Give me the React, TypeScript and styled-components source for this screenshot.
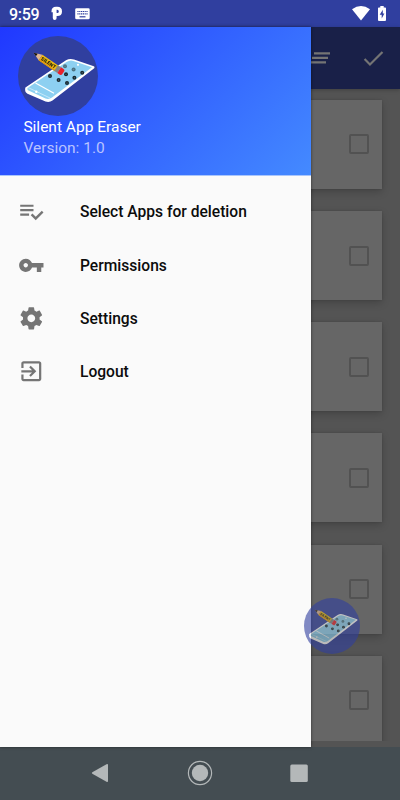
import React from 'react';
import styled, { createGlobalStyle } from 'styled-components';

const GlobalStyle = createGlobalStyle`
  * { box-sizing: border-box; }
  body { margin: 0; background: #545454; font-family: Roboto, sans-serif; overflow: hidden; }
  svg { display: block; }
`;

const Screen = styled.div`
  position: relative;
  width: 400px;
  height: 800px;
  display: flex;
  flex-direction: column;
  overflow: hidden;
`;

const StatusBar = styled.header`
  flex: 0 0 27px;
  display: flex;
  align-items: center;
  background: #303f9f;
  color: #fff;
  padding: 0 14px 0 9px;
`;

const Clock = styled.span`
  width: 42px;
  font-size: 16px;
  font-weight: 500;
  line-height: 24px;
  letter-spacing: -0.3px;
  padding-top: 2px;
`;

const StatusIcons = styled.div<{ $gap: number; $end?: boolean }>`
  display: flex;
  align-items: center;
  gap: ${(p) => p.$gap}px;
  margin-left: ${(p) => (p.$end ? 'auto' : '0')};
`;

const Body = styled.div`
  position: relative;
  flex: 1;
  min-height: 0;
  background: #545454;
`;

const AppBar = styled.div`
  height: 62px;
  display: flex;
  align-items: center;
  justify-content: flex-end;
  gap: 30px;
  padding-right: 13px;
  background: #192048;
  box-shadow: 0 1px 4px rgba(0, 0, 0, 0.25);
`;

const CardList = styled.div`
  display: flex;
  flex-direction: column;
  gap: 22.15px;
  padding: 11px 18px 0;
  height: 652px;
  overflow: hidden;
`;

const Card = styled.div`
  flex: 0 0 89px;
  display: flex;
  justify-content: flex-end;
  padding: 34.4px 13px 0 0;
  background: #666;
  box-shadow: 0 3px 8px rgba(0, 0, 0, 0.2), 0 0 2px rgba(0, 0, 0, 0.12);
`;

const CheckBox = styled.div`
  width: 20px;
  height: 20px;
  border: 2px solid #525252;
  border-radius: 2px;
`;

const Drawer = styled.aside`
  position: absolute;
  inset: 0 auto 0 0;
  width: 311px;
  background: #fafafa;
  box-shadow: 0 0 3px rgba(0, 0, 0, 0.5);
`;

const DrawerHeader = styled.div`
  height: 149px;
  padding: 9px 0 0 18px;
  background: linear-gradient(135deg, #2038ff 0%, #448aff 100%);
  border-bottom: 1px solid #a9c5fb;
`;

const AppName = styled.div`
  margin: 1px 0 0 5.4px;
  font-size: 15.5px;
  line-height: 21px;
  color: #fff;
`;

const Version = styled(AppName)`
  margin-top: 0;
  color: #b9c3ff;
`;

const Menu = styled.nav`
  display: flex;
  flex-direction: column;
  padding-top: 9px;
`;

const MenuItem = styled.div`
  height: 53.3px;
  display: flex;
  align-items: center;
  gap: 35.4px;
  padding-left: 18px;
  font-size: 15.6px;
  font-weight: 460;
  color: #0c0c0c;
`;

const MenuLabel = styled.span`
  padding-top: 1.2px;
`;

const Fab = styled.div`
  position: absolute;
  left: 304px;
  top: 598px;
  opacity: 0.6;
`;

const NavBar = styled.footer`
  flex: 0 0 53px;
  display: flex;
  align-items: center;
  justify-content: center;
  gap: 74px;
  padding-bottom: 1px;
  background: #444d52;
`;

function Icon({ d, size = 26.6, color = '#757575' }: { d: string; size?: number; color?: string }) {
  return (
    <svg width={size} height={size} viewBox="0 0 24 24" fill={color}>
      <path d={d} />
    </svg>
  );
}

const menu = [
  { label: 'Select Apps for deletion', d: 'M14 10H2v2h12v-2zm0-4H2v2h12V6zM2 16h8v-2H2v2zm19.5-4.5L23 13l-6.99 7-4.51-4.5L13 14l3.01 3 5.49-5.5z' },
  { label: 'Permissions', d: 'M12.65 10C11.83 7.67 9.61 6 7 6c-3.31 0-6 2.69-6 6s2.69 6 6 6c2.61 0 4.83-1.67 5.65-4H17v4h4v-4h2v-4H12.65zM7 14c-1.1 0-2-.9-2-2s.9-2 2-2 2 .9 2 2-.9 2-2 2z' },
  { label: 'Settings', d: 'M19.43 12.98c.04-.32.07-.64.07-.98s-.03-.66-.07-.98l2.11-1.65c.19-.15.24-.42.12-.64l-2-3.46c-.12-.22-.39-.3-.61-.22l-2.49 1c-.52-.4-1.08-.73-1.69-.98l-.38-2.65C14.46 2.18 14.25 2 14 2h-4c-.25 0-.46.18-.49.42l-.38 2.65c-.61.25-1.17.59-1.69.98l-2.49-1c-.23-.09-.49 0-.61.22l-2 3.46c-.13.22-.07.49.12.64l2.11 1.65c-.04.32-.07.65-.07.98s.03.66.07.98l-2.11 1.65c-.19.15-.24.42-.12.64l2 3.46c.12.22.39.3.61.22l2.49-1c.52.4 1.08.73 1.69.98l.38 2.65c.03.24.24.42.49.42h4c.25 0 .46-.18.49-.42l.38-2.65c.61-.25 1.17-.59 1.69-.98l2.49 1c.23.09.49 0 .61-.22l2-3.46c.12-.22.07-.49-.12-.64l-2.11-1.65zM12 15.5c-1.93 0-3.5-1.57-3.5-3.5s1.57-3.5 3.5-3.5 3.5 1.57 3.5 3.5-1.57 3.5-3.5 3.5z' },
  { label: 'Logout', d: 'M10.09 15.59L11.5 17l5-5-5-5-1.41 1.41L12.67 11H3v2h9.67l-2.58 2.59zM19 3H5c-1.11 0-2 .9-2 2v4h2V5h14v14H5v-4H3v4c0 1.1.89 2 2 2h14c1.1 0 2-.9 2-2V5c0-1.1-.9-2-2-2z' },
];

const dots = [[32, 40], [40.6, 44], [49, 47], [47, 30.3], [55.6, 33.4], [64.2, 36.8], [48, 38.3], [56.4, 41.7]];

function Logo({ size }: { size: number }) {
  return (
    <svg width={size} height={size} viewBox="0 0 80 80">
      <circle cx="40" cy="40" r="40" fill="#303f9f" />
      <path d="M7.4 51.6 L48 24.3 Q52 22 56 23.6 L75.8 30.3 Q77.2 31 76.2 32.3 L34.5 64.6 Q31.5 66.8 27.5 65.6 L9.5 57.8 Q6.6 56.3 7.2 52.3Z" fill="#fff" />
      <path d="M9.8 51.7 L48.5 26 Q52 23.7 55.3 24.9 L74 31.2 L34 61.6 Q31 63.8 27.5 62.6 L10 54.2 Q8.6 52.8 9.8 51.7Z" fill="#8dd0f1" />
      <path d="M17.5 47 L36 57.3" stroke="#fff" strokeWidth="1.2" />
      <path d="M10 51.5 L32 62" stroke="#d3eefa" strokeWidth=".8" />
      <circle cx="18.3" cy="55.7" r="1.2" fill="#fff" />
      <circle cx="60" cy="28.8" r="1.1" fill="#fff" />
      {dots.map(([x, y], i) => (
        <g key={i}>
          <circle cx={x} cy={y} r="2" fill={i === 3 || i === 4 ? '#4d7585' : '#17282f'} />
          <circle cx={x} cy={y} r=".5" fill="#7297a5" />
        </g>
      ))}
      <g transform="translate(15.5 16.8) rotate(34)">
        <path d="M0 0 L8.5 -3.4 V3.4Z" fill="#e0b693" />
        <path d="M0 0 L4 -1.6 V1.6Z" fill="#111" />
        <path d="M8.5 -3.4 H28 V3.4 H8.5Z" fill="#f5bb13" />
        <path d="M8.5 2.3 H28 V3.4 H8.5Z" fill="#d69415" />
        <path d="M27.2 -3.4 H31 V3.4 H27.2Z" fill="#858585" />
        <path d="M31 -3.4 H34 Q35.8 -3.4 35.8 -1.8 V1.8 Q35.8 3.4 34 3.4 H31Z" fill="#e9212b" />
        <text x="9.3" y="1.7" fontFamily="Roboto, sans-serif" fontSize="5" fontWeight="900" textLength="17" fill="#211b0a">SILENT</text>
      </g>
    </svg>
  );
}

export default function App() {
  return (
    <Screen>
      <GlobalStyle />
      <StatusBar>
        <Clock>9:59</Clock>
        <StatusIcons $gap={11}>
          <svg width="13" height="15" viewBox="0 0 13 15">
            <path fillRule="evenodd" d="M.5 5.2 Q.5 1 5 .8 H6.3 Q11 .8 11 5.4 Q11 9.9 6.3 9.9 H5.6 V12 Q5.6 14 3.7 14 Q1.8 14 1.8 12 V6.2 H.5Z M5.6 3.8 V7 H6.2 Q7.8 7 7.8 5.4 Q7.8 3.8 6.2 3.8Z" fill="#fff" />
          </svg>
          <svg width="15" height="12" viewBox="0 0 15 12">
            <rect width="14.5" height="11" x=".2" y=".3" rx="1.4" fill="#fff" />
            <path d="M2.4 3.5H12.6M2.4 5.8H12.6" stroke="#303f9f" strokeWidth="1.2" strokeDasharray="1.2 .6" />
            <path d="M4.5 8.8H10.5" stroke="#303f9f" strokeWidth="1.2" />
          </svg>
        </StatusIcons>
        <StatusIcons $gap={8} $end>
          <svg width="18" height="15" viewBox="0 0 18 15"><path d="M0 3.2 Q9 -3.2 18 3.2 L9 14.5Z" fill="#fff" /></svg>
          <svg width="8" height="15" viewBox="0 0 8 15">
            <path d="M2.3 0 H5.7 V1.4 H7.2 Q8 1.4 8 2.3 V14 Q8 15 7 15 H1 Q0 15 0 14 V2.3 Q0 1.4 .8 1.4 H2.3Z" fill="#fff" />
            <path d="M4.8 3.8 L1.7 8.8 H3.7 V12.5 L6.4 7.5 H4.8Z" fill="#303f9f" />
          </svg>
        </StatusIcons>
      </StatusBar>
      <Body>
        <AppBar>
          <svg width="20" height="14" viewBox="0 0 20 14">
            <path d="M4 2.4H20M2 6.9H18M0 11.4H16" stroke="#747474" strokeWidth="2.3" />
          </svg>
          <Icon d="M9 16.17L4.83 12l-1.42 1.41L9 19 21 7l-1.41-1.41z" color="#747474" />
        </AppBar>
        <CardList>
          {[0, 1, 2, 3, 4, 5].map((i) => (
            <Card key={i}><CheckBox /></Card>
          ))}
        </CardList>
        <Drawer>
          <DrawerHeader>
            <Logo size={80} />
            <AppName>Silent App Eraser</AppName>
            <Version>Version: 1.0</Version>
          </DrawerHeader>
          <Menu>
            {menu.map((m) => (
              <MenuItem key={m.label}>
                <Icon d={m.d} />
                <MenuLabel>{m.label}</MenuLabel>
              </MenuItem>
            ))}
          </Menu>
        </Drawer>
      </Body>
      <Fab><Logo size={56} /></Fab>
      <NavBar>
        <svg width="26" height="26" viewBox="0 0 26 26"><path d="M5.3 12.2 L19.5 4.2 Q21 3.5 21 5 V21 Q21 22.4 19.5 21.7 L5.3 13.8 Q4.3 13 5.3 12.2Z" fill="#b4b8b9" /></svg>
        <svg width="26" height="26" viewBox="0 0 26 26">
          <circle cx="13" cy="13" r="11.6" fill="none" stroke="#b4b8b9" strokeWidth="1.2" />
          <circle cx="13" cy="13" r="8.2" fill="#b4b8b9" />
        </svg>
        <svg width="26" height="26" viewBox="0 0 26 26"><rect x="3.3" y="4.5" width="17.5" height="17.5" rx="1.5" fill="#b4b8b9" /></svg>
      </NavBar>
    </Screen>
  );
}
